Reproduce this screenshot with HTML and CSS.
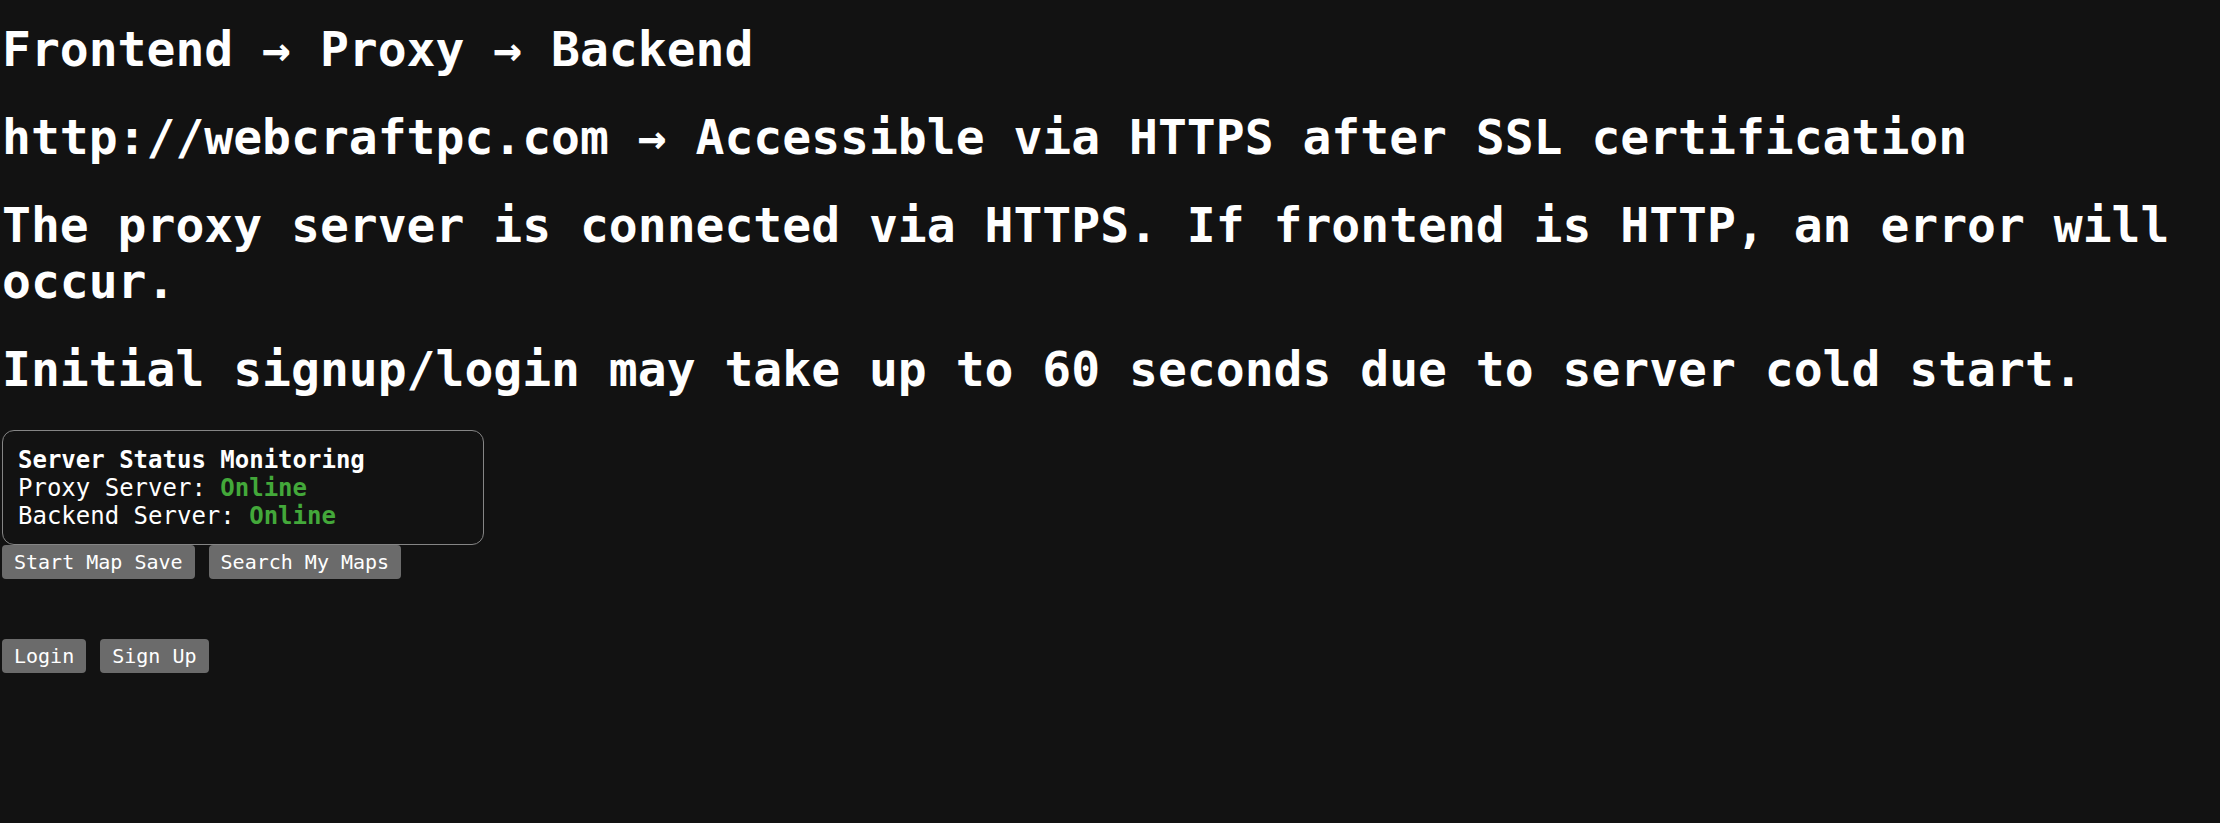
FILE: index.html
```html
<!DOCTYPE html>
<html lang="en">
<head>
<meta charset="utf-8">
<title>Server Status</title>
<link rel="stylesheet" href="styles.css">
</head>
<body>
<div class="app">
  <h1 class="title">Frontend → Proxy → Backend</h1>
  <h1 class="title">http://webcraftpc.com → Accessible via HTTPS after SSL certification</h1>
  <h1 class="title">The proxy server is connected via HTTPS. If frontend is HTTP, an error will occur.</h1>
  <h1 class="title">Initial signup/login may take up to 60 seconds due to server cold start.</h1>
  <div class="status">
    <div class="status-head">Server Status Monitoring</div>
    <div class="status-row">Proxy Server: <span class="online">Online</span></div>
    <div class="status-row">Backend Server: <span class="online">Online</span></div>
  </div>
  <div class="actions">
    <button class="btn">Start Map Save</button>
    <button class="btn">Search My Maps</button>
  </div>
  <div class="actions auth">
    <button class="btn">Login</button>
    <button class="btn">Sign Up</button>
  </div>
</div>
</body>
</html>
```
FILE: styles.css
```css
html, body {
  margin: 0;
  padding: 0;
  background: #121212;
}
body {
  color: #ffffff;
  font-family: "DejaVu Sans Mono", "Liberation Mono", monospace;
}
.app {
  padding: 21px 2px 0 2px;
}
.title {
  font-size: 48px;
  font-weight: bold;
  line-height: normal;
  margin: 32px 0;
}
.title:first-child {
  margin-top: 0;
}
.status {
  margin-top: 33px;
  box-sizing: border-box;
  width: 482px;
  border: 1px solid #858585;
  border-radius: 12px;
  padding: 15px 14px 14px 15px;
  font-size: 24px;
  line-height: normal;
}
.status-head {
  font-weight: bold;
}
.online {
  color: #43a83a;
  font-weight: bold;
}
.actions {
  display: flex;
  gap: 14px;
}
.auth {
  margin-top: 60px;
}
.btn {
  font-family: "DejaVu Sans Mono", "Liberation Mono", monospace;
  font-size: 20px;
  line-height: normal;
  color: #ffffff;
  background: #6b6b6b;
  border: none;
  border-radius: 4px;
  padding: 5px 12px;
  margin: 0;
}
```
